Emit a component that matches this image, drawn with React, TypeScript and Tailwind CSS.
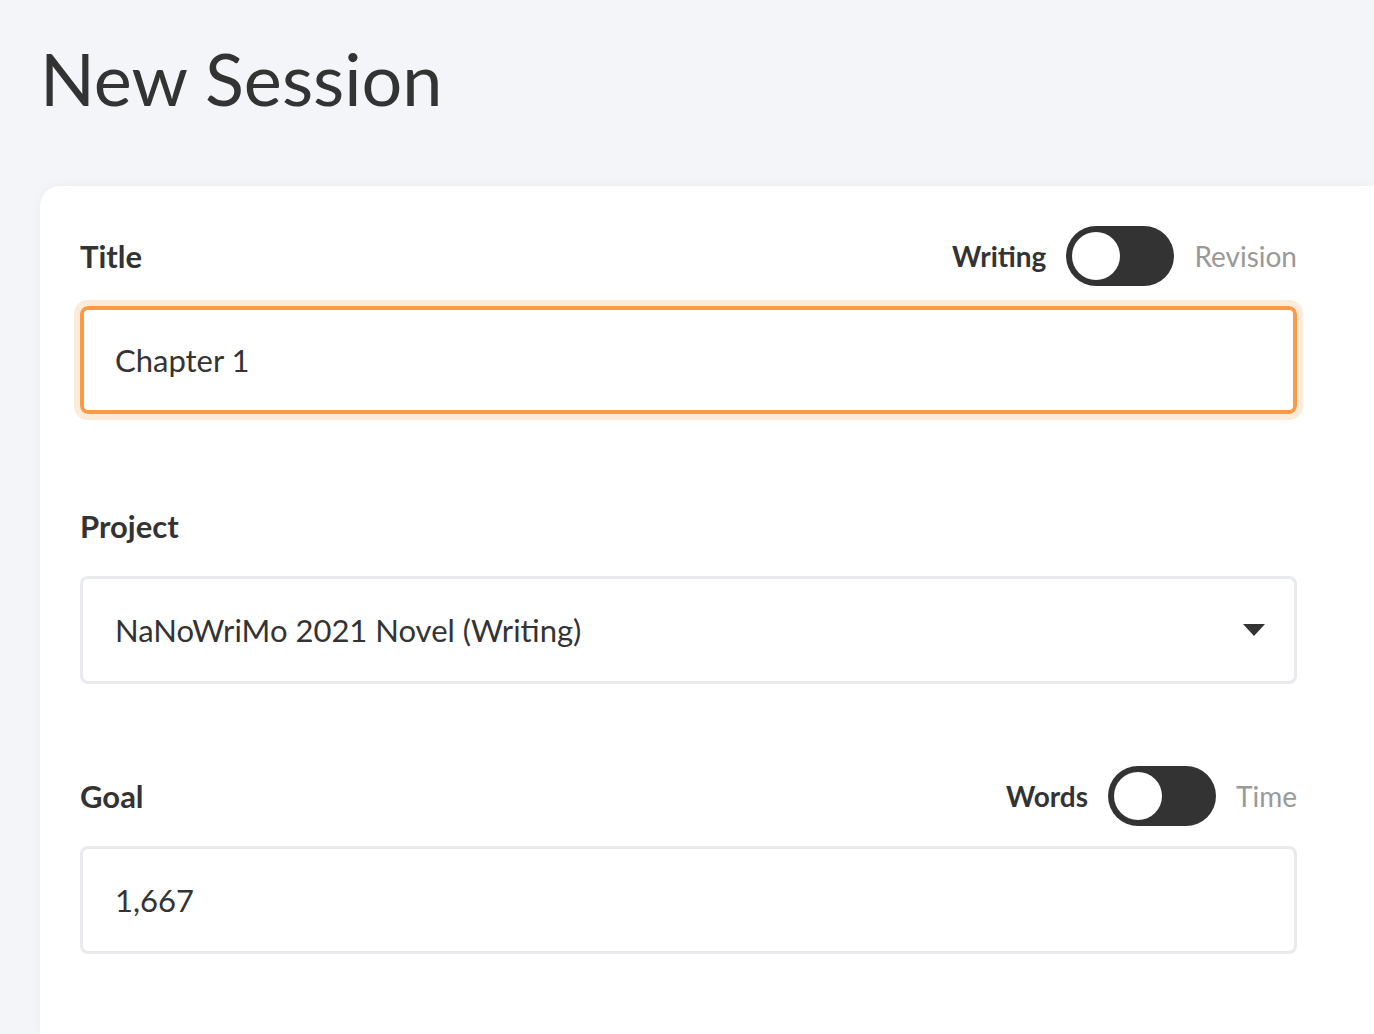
import { useState } from "react";

function Toggle({ left, right }: { left: string; right: string }) {
  const [on, setOn] = useState(false);
  return (
    <div className="flex items-center">
      <span className="text-[28px] font-bold text-[#333]">{left}</span>
      <button
        type="button"
        onClick={() => setOn(!on)}
        className="mx-5 flex h-[60px] w-[108px] items-center rounded-full bg-[#333] px-[6px]"
      >
        <span className={`h-[48px] w-[48px] rounded-full bg-white ${on ? "ml-auto" : ""}`} />
      </button>
      <span className="text-[28px] text-[#999]">{right}</span>
    </div>
  );
}

function Label({ children }: { children: string }) {
  return <label className="text-[31px] font-bold text-[#333]">{children}</label>;
}

export default function App() {
  return (
    <div
      className="flex h-screen flex-col overflow-hidden bg-[#f4f5f9]"
      style={{ fontFamily: "Lato, 'Noto Sans', sans-serif" }}
    >
      <h1 className="pl-[40px] pt-[42px] text-[72px] leading-none text-[#333]">New Session</h1>

      <div className="ml-[40px] mt-[72px] flex-1 rounded-tl-[20px] bg-white pl-10 pr-[77px] pt-10 shadow-[0_0_12px_rgba(0,0,0,0.04)]">
        <div className="flex h-[60px] items-center justify-between">
          <Label>Title</Label>
          <Toggle left="Writing" right="Revision" />
        </div>
        <div className="mt-5 rounded-[8px] border-[4px] border-[#fb9a45] px-[31px] py-[32px] outline outline-[6px] outline-[#fdebd9]">
          <div className="text-[31px] leading-[36px] text-[#333]">Chapter 1</div>
        </div>

        <div className="mt-[82px] flex h-[60px] items-center">
          <Label>Project</Label>
        </div>
        <div className="mt-5 flex items-center justify-between rounded-[8px] border-[3px] border-[#e9eaee] py-[33px] pl-[32px] pr-[29px]">
          <div className="text-[31px] leading-[36px] text-[#333]">NaNoWriMo 2021 Novel (Writing)</div>
          <svg width="22" height="12" viewBox="0 0 22 12">
            <path d="M0 0 H22 L11 12 Z" fill="#333" />
          </svg>
        </div>

        <div className="mt-[82px] flex h-[60px] items-center justify-between">
          <Label>Goal</Label>
          <Toggle left="Words" right="Time" />
        </div>
        <div className="mt-5 rounded-[8px] border-[3px] border-[#e9eaee] px-[32px] py-[33px]">
          <div className="text-[31px] leading-[36px] text-[#333]">1,667</div>
        </div>
      </div>
    </div>
  );
}
